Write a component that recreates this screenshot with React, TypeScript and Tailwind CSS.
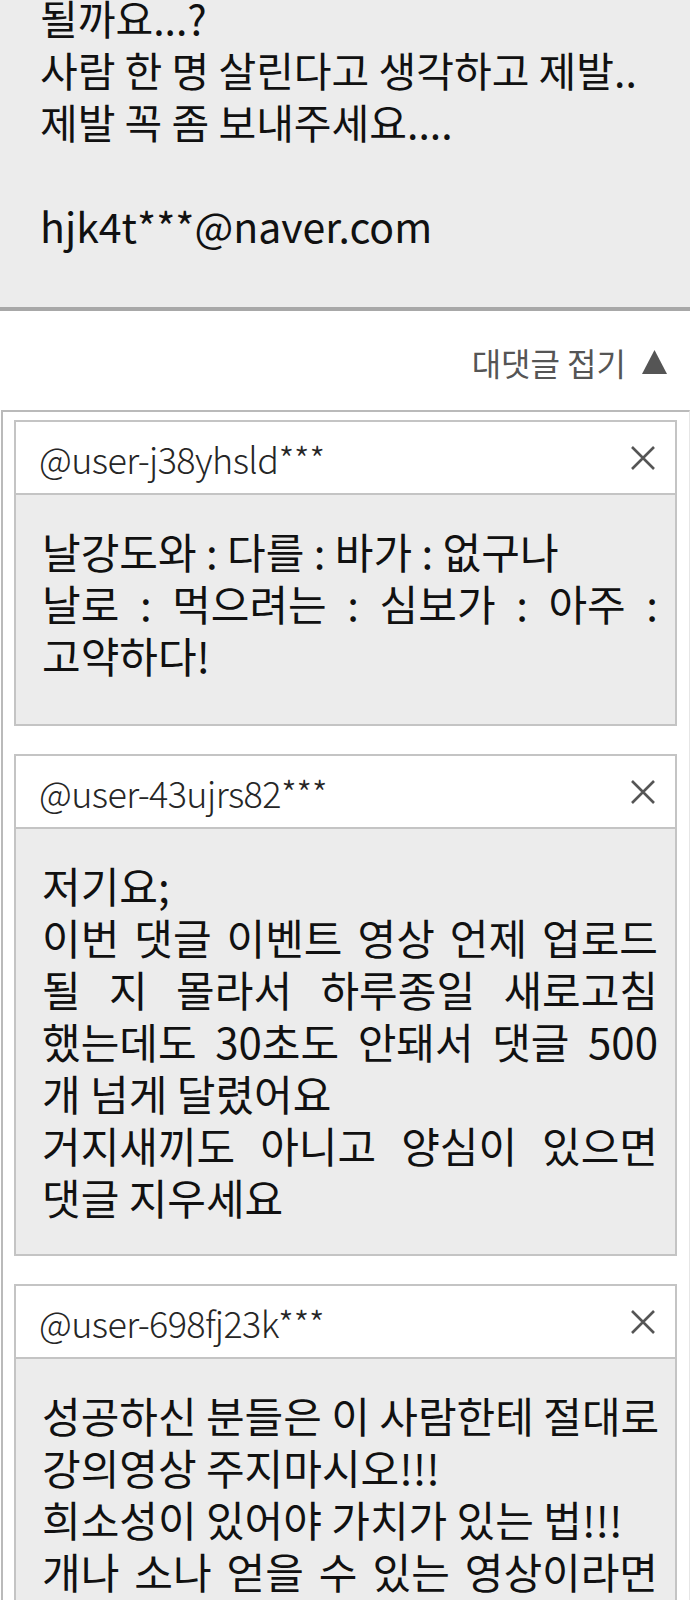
import React from "react";

type Line = { t: string; j?: boolean };

const XIcon = () => (
  <svg width="26" height="26" viewBox="0 0 26 26" className="shrink-0">
    <path d="M2 2 L24 24 M24 2 L2 24" stroke="#555" strokeWidth="2.6" strokeLinecap="butt" fill="none" />
  </svg>
);

const Reply = ({ user, lines, extra }: { user: string; lines: Line[]; extra?: boolean }) => (
  <div className="border-2 border-[#c4c4c4]">
    <div className="h-[73px] bg-white border-b-2 border-[#c4c4c4] flex items-center justify-between pl-[23px] pr-[19px]">
      <span className="text-[36px] leading-none text-[#262626] font-light tracking-[-0.6px]">{user}</span>
      <XIcon />
    </div>
    <div
      className={
        "bg-[#ececec] pl-[26px] pr-[17px] pt-[30px] text-[42px] leading-[52px] text-[#111] " +
        (extra ? "pb-[43px]" : "pb-[31px]")
      }
    >
      {lines.map((l, i) => (
        <div
          key={i}
          className={l.j ? "text-justify [text-align-last:justify] whitespace-nowrap" : "whitespace-nowrap"}
        >
          {l.t}
        </div>
      ))}
    </div>
  </div>
);

export default function App() {
  return (
    <div className="w-[690px] h-[1600px] overflow-hidden bg-white font-['Noto_Sans_CJK_KR','Noto_Sans',sans-serif]">
      <div className="bg-[#ececec] border-b-4 border-[#a8a8a8] pl-[40px] pb-[56px] text-[41px] leading-[52px] text-[#111]">
        <div className="-mt-[9px]">
          <div>될까요...?</div>
          <div>사람 한 명 살린다고 생각하고 제발..</div>
          <div>제발 꼭 좀 보내주세요....</div>
          <div>&nbsp;</div>
          <div>hjk4t***@naver.com</div>
        </div>
      </div>

      <div className="h-[99px] flex items-center justify-end pr-[23px] pt-[3px] text-[#555] text-[32px]">
        <span className="leading-none">대댓글 접기</span>
        <svg width="25" height="24" viewBox="0 0 25 24" className="ml-[16px]">
          <path d="M12.5 0 L25 24 L0 24 Z" fill="#555" />
        </svg>
      </div>

      <div className="ml-px border-t-2 border-l-2 border-r border-[#bababa] border-r-[#e6e6e6] pl-[11px] pr-[12px] pt-[8px] flex flex-col gap-[28px]">
        <Reply
          extra
          user="@user-j38yhsld***"
          lines={[
            { t: "날강도와 : 다를 : 바가 : 없구나" },
            { t: "날로 : 먹으려는 : 심보가 : 아주 :", j: true },
            { t: "고약하다!" },
          ]}
        />
        <Reply
          user="@user-43ujrs82***"
          lines={[
            { t: "저기요;" },
            { t: "이번 댓글 이벤트 영상 언제 업로드", j: true },
            { t: "될 지 몰라서 하루종일 새로고침", j: true },
            { t: "했는데도 30초도 안돼서 댓글 500", j: true },
            { t: "개 넘게 달렸어요" },
            { t: "거지새끼도 아니고 양심이 있으면", j: true },
            { t: "댓글 지우세요" },
          ]}
        />
        <Reply
          user="@user-698fj23k***"
          lines={[
            { t: "성공하신 분들은 이 사람한테 절대로", j: true },
            { t: "강의영상 주지마시오!!!" },
            { t: "희소성이 있어야 가치가 있는 법!!!" },
            { t: "개나 소나 얻을 수 있는 영상이라면", j: true },
            { t: "" },
          ]}
        />
      </div>
    </div>
  );
}
